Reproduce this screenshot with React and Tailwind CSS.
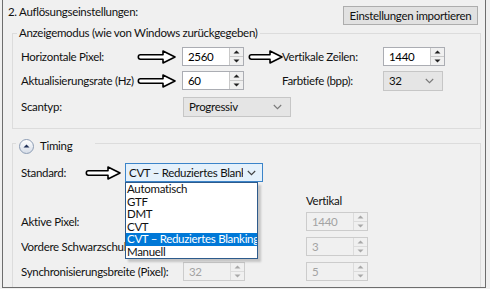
import React from "react";

const FONT = { fontFamily: 'Lato, "Liberation Sans", sans-serif' };

function Arrow({ w = 38 }) {
  const h = 14;
  const hx = w - 13;
  return (
    <svg width={w} height={h} viewBox={`0 0 ${w} ${h}`} className="block">
      <path
        d={`M3.5 4.8 H${hx} V1 L${w - 1} 7 L${hx} 13 V9.2 H3.5 A2.2 2.2 0 0 1 3.5 4.8 Z`}
        fill="white"
        stroke="black"
        strokeWidth="1.6"
        strokeLinejoin="round"
      />
    </svg>
  );
}

function Tri({ up, color }) {
  return (
    <svg width="7" height="4" viewBox="0 0 7 4" className="block">
      {up ? <path d="M0.5 3.5 L3.5 0.5 L6.5 3.5 Z" fill={color} /> : <path d="M0.5 0.5 L3.5 3.5 L6.5 0.5 Z" fill={color} />}
    </svg>
  );
}

function Spin({ value, disabled }) {
  return (
    <div
      className={
        disabled
          ? "flex h-[19px] w-[62px] border border-[#cccccc] bg-[#f0f0f0] text-[#a3a3a3]"
          : "flex h-[19px] w-[62px] border border-[#abadb3] bg-white text-black"
      }
    >
      <div className="flex-1 pl-[5px] leading-[17px]">{value}</div>
      <div
        className={
          disabled
            ? "flex w-[14px] flex-col border-l border-[#dcdcdc] bg-[#f0f0f0]"
            : "flex w-[14px] flex-col border-l border-[#c9c9c9] bg-[#f0f0f0]"
        }
      >
        <div className="flex flex-1 items-center justify-center">
          <Tri up color={disabled ? "#a8a8a8" : "#202020"} />
        </div>
        <div className={disabled ? "h-px bg-[#dcdcdc]" : "h-px bg-[#c9c9c9]"} />
        <div className="flex flex-1 items-center justify-center">
          <Tri color={disabled ? "#a8a8a8" : "#202020"} />
        </div>
      </div>
    </div>
  );
}

function Chevron({ color = "#7a7a7a" }) {
  return (
    <svg width="9" height="6" viewBox="0 0 9 6" className="block">
      <path d="M0.8 1 L4.5 4.7 L8.2 1" fill="none" stroke={color} strokeWidth="1.1" />
    </svg>
  );
}

function Combo({ value, w }) {
  return (
    <div className={`flex h-[20px] ${w} items-center border border-[#c6c6c6] bg-[#e5e5e5] pl-[5px] pr-[8px]`}>
      <span className="flex-1">{value}</span>
      <Chevron />
    </div>
  );
}

const items = ["Automatisch", "GTF", "DMT", "CVT", "CVT – Reduziertes Blanking", "Manuell"];

export default function App() {
  return (
    <div className="h-[289px] w-[490px] overflow-hidden bg-[#f0f0f0] text-[11.5px] tracking-[-0.3px] text-[#101010]" style={FONT}>
      <div className="ml-[2px] h-[288px] w-[484px] overflow-hidden border-b border-l border-r border-[#6d6d6d]">
        {/* header */}
        <div className="flex h-[26px] items-start justify-between pl-[5px] pr-[7px]">
          <div className="pt-[3px] leading-[18px]">2. Auflösungseinstellungen:</div>
          <button className="mt-[6px] flex h-[19px] w-[135px] items-center justify-center whitespace-nowrap border border-[#adadad] bg-[#e1e1e1] leading-none">
            Einstellungen importieren
          </button>
        </div>

        {/* Anzeigemodus */}
        <fieldset className="ml-[9px] w-[469px] border border-[#dcdcdc] px-[8px] pb-[11px]">
          <legend className="-ml-[4px] px-[2px] leading-[14px]">Anzeigemodus (wie von Windows zurückgegeben)</legend>
          <div className="flex flex-col gap-[4px] pt-[7px]">
            <div className="flex h-[19px] items-center">
              <div className="w-[116px] whitespace-nowrap">Horizontale Pixel:</div>
              <div className="w-[45px]"><Arrow w={39} /></div>
              <Spin value="2560" />
              <div className="w-[4px]" />
              <div className="w-[34px]"><Arrow w={35} /></div>
              <div className="w-[101px] whitespace-nowrap">Vertikale Zeilen:</div>
              <Spin value="1440" />
            </div>
            <div className="flex h-[21px] items-center">
              <div className="w-[116px] whitespace-nowrap">Aktualisierungsrate (Hz)</div>
              <div className="w-[45px]"><Arrow w={39} /></div>
              <Spin value="60" />
              <div className="w-[38px]" />
              <div className="w-[101px] whitespace-nowrap">Farbtiefe (bpp):</div>
              <Combo value="32" w="w-[60px]" />
            </div>
            <div className="mt-[2px] flex h-[20px] items-center">
              <div className="w-[162px]">Scantyp:</div>
              <Combo value="Progressiv" w="w-[108px]" />
            </div>
          </div>
        </fieldset>

        {/* Timing */}
        <fieldset className="ml-[9px] mt-[9px] h-[200px] w-[469px] border border-b-0 border-[#dcdcdc] px-[8px]">
          <legend className="-ml-[5px] h-[10px] w-[79px] pl-[3px]">
            <div className="flex h-[16px] items-center">
              <div className="flex h-[15px] w-[15px] items-center justify-center rounded-full border border-[#8c9cb4] bg-gradient-to-b from-white to-[#d6dde8]">
                <svg width="7" height="4" viewBox="0 0 7 4" className="block">
                  <path d="M0.5 3.5 L3.5 0.5 L6.5 3.5 Z" fill="#1f2f57" />
                </svg>
              </div>
              <span className="ml-[6px] leading-[16px]">Timing</span>
            </div>
          </legend>

          <div className="pt-[15px]">
            <div className="flex h-[19px] items-center">
              <div className="w-[64px]">Standard:</div>
              <div className="w-[40px]"><Arrow w={36} /></div>
              <div className="relative">
                <div className="flex h-[19px] w-[138px] items-center border border-[#3b84c9] bg-[#e5f1fb] pl-[3px] pr-[6px]">
                  <span className="w-[114px] overflow-hidden whitespace-nowrap">CVT – Reduziertes Blanking</span>
                  <span className="flex-1" />
                  <Chevron color="#404040" />
                </div>
                <div className="absolute left-0 top-full z-10 w-[133px] border border-[#2d5b8c] bg-white shadow-[3px_3px_2px_rgba(0,0,0,0.18)]">
                  {items.map((t, i) => (
                    <div
                      key={t}
                      className={
                        i === 4
                          ? "h-[12.5px] overflow-hidden whitespace-nowrap bg-[#0078d7] pl-[1px] leading-[12.5px] text-white"
                          : "h-[12.5px] overflow-hidden whitespace-nowrap pl-[1px] leading-[12.5px] text-[#101010]"
                      }
                    >
                      {t}
                    </div>
                  ))}
                </div>
              </div>
            </div>

            <div className="mt-[12px] flex h-[14px] items-center leading-[14px]">
              <div className="w-[162px]" />
              <div className="w-[123px]">Horizontal</div>
              <div>Vertikal</div>
            </div>

            <div className="mt-[4px] flex flex-col gap-[6px]">
              <div className="flex h-[19px] items-center">
                <div className="w-[162px]">Aktive Pixel:</div>
                <Spin value="2560" disabled />
                <div className="w-[61px]" />
                <Spin value="1440" disabled />
              </div>
              <div className="flex h-[19px] items-center">
                <div className="w-[162px] overflow-hidden whitespace-nowrap">Vordere Schwarzschulter (Pixel):</div>
                <Spin value="48" disabled />
                <div className="w-[61px]" />
                <Spin value="3" disabled />
              </div>
              <div className="flex h-[19px] items-center">
                <div className="w-[162px] whitespace-nowrap">Synchronisierungsbreite (Pixel):</div>
                <Spin value="32" disabled />
                <div className="w-[61px]" />
                <Spin value="5" disabled />
              </div>
            </div>
          </div>
        </fieldset>
      </div>
    </div>
  );
}
